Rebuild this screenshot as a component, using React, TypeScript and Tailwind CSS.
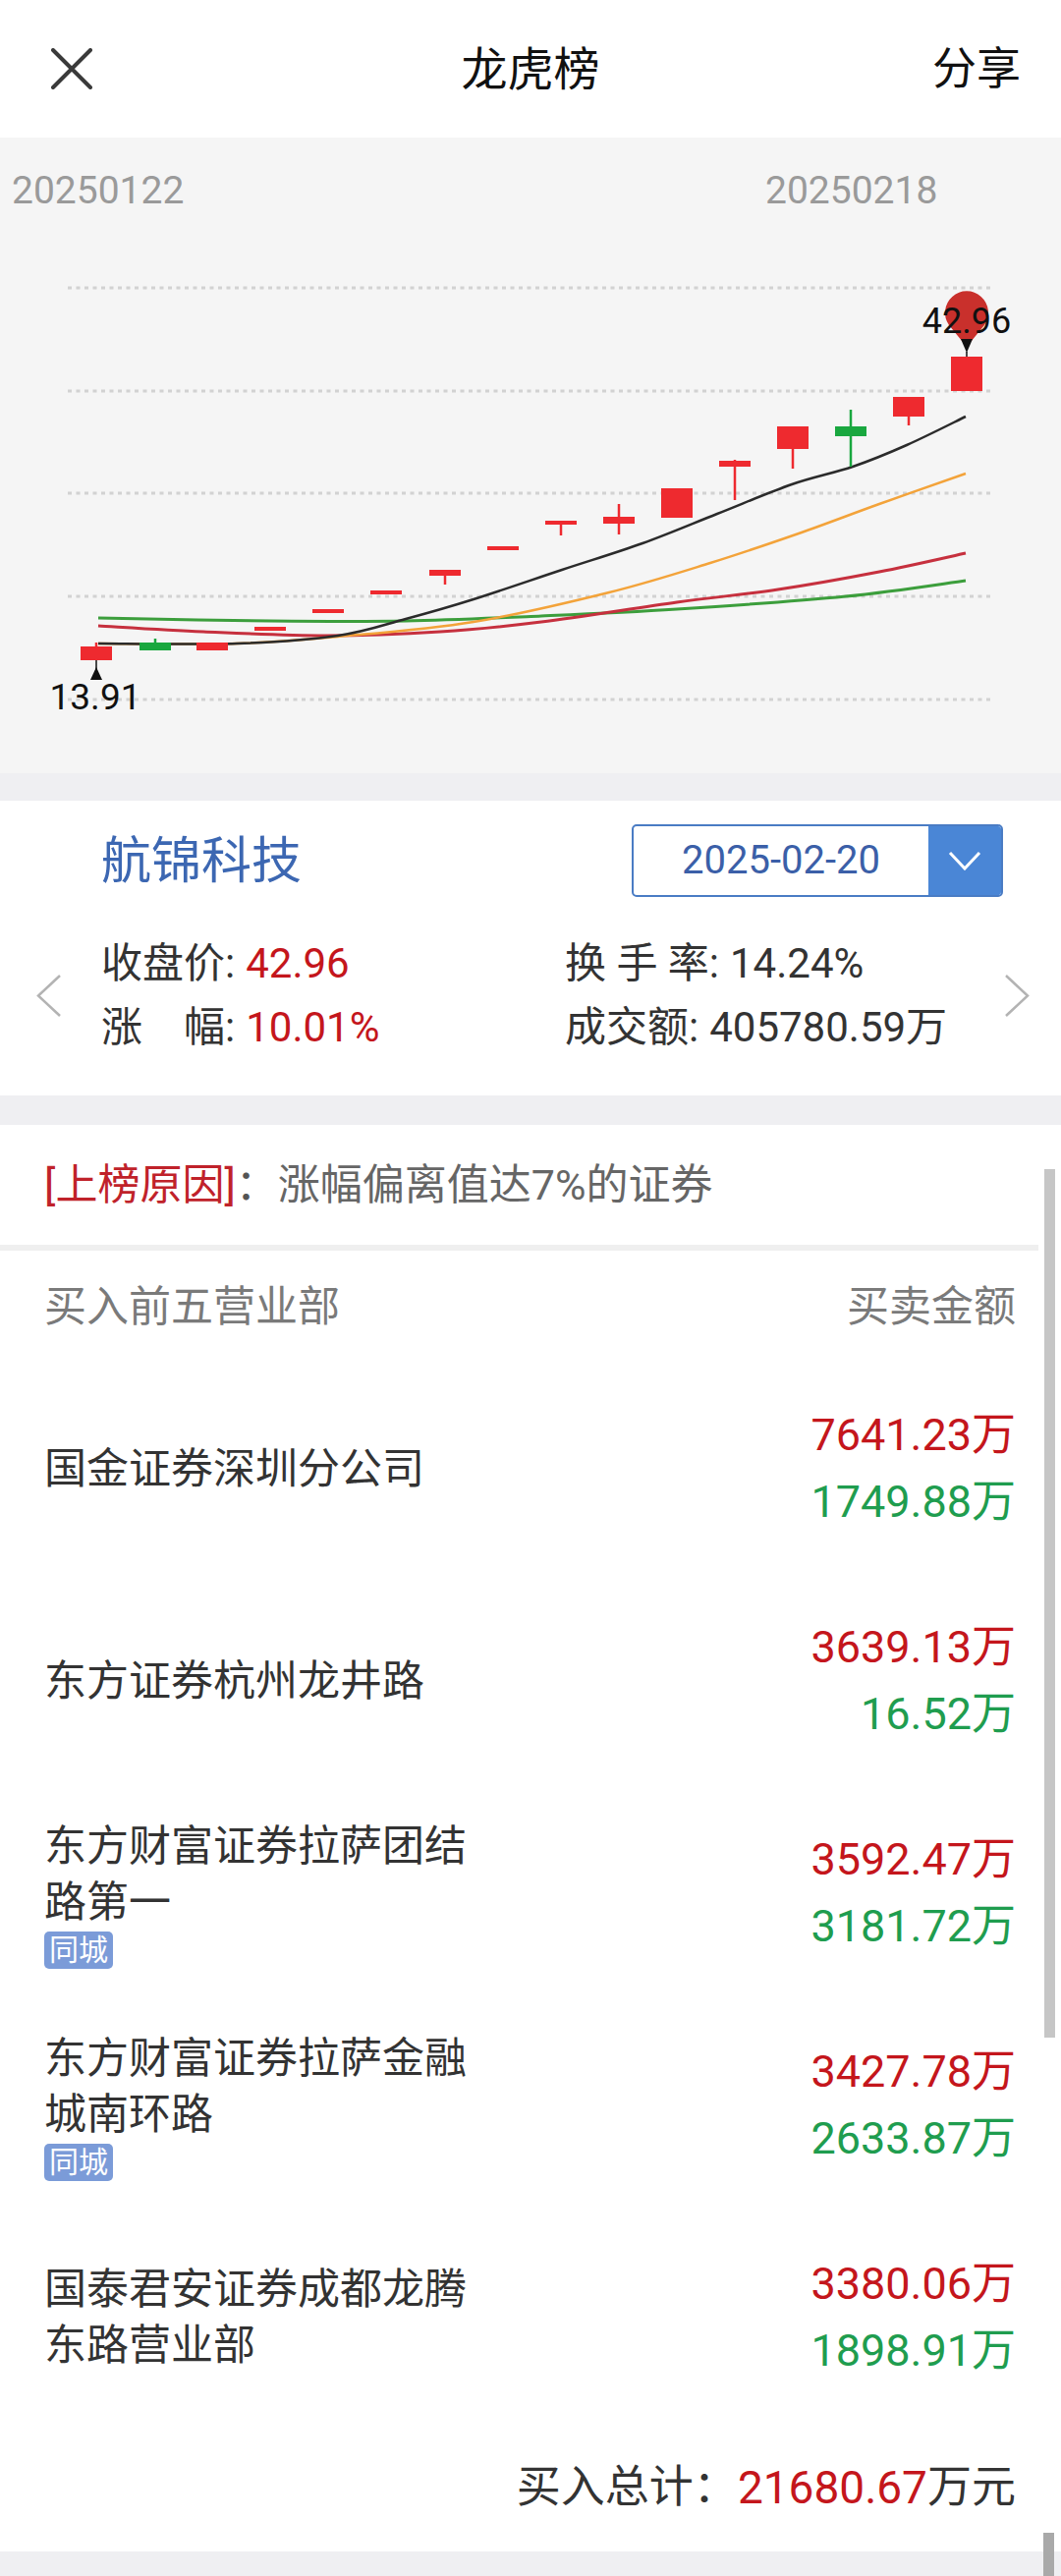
import React from "react";

const R = "#ee2a2f";
const G = "#19a73f";

type C = [number, number, number, number, number, string];
const candles: C[] = [
  [98, 518, 532, 514, 532, R],
  [158, 514, 522, 510, 522, G],
  [216, 514, 522, 514, 522, R],
  [275, 498, 502, 498, 502, R],
  [334, 480, 484, 480, 484, R],
  [393, 461, 465, 461, 465, R],
  [453, 440, 446, 440, 455, R],
  [512, 416, 420, 416, 420, R],
  [571, 390, 394, 390, 405, R],
  [630, 386, 393, 373, 404, R],
  [689, 357, 387, 357, 387, R],
  [748, 329, 335, 328, 369, R],
  [807, 294, 317, 294, 337, R],
  [866, 294, 304, 277, 335, G],
  [925, 264, 284, 264, 293, R],
  [984, 223, 258, 223, 258, R],
];

const maBlack: [number, number][] = [
  [100, 515], [241, 515], [344, 507], [413, 490], [482, 470], [572, 440], [654, 413], [730, 383], [806, 353], [868, 335], [923, 313], [983, 284],
];
const maOrange: [number, number][] = [
  [100, 515], [241, 515], [344, 508], [482, 493], [620, 463], [723, 433], [813, 403], [895, 373], [983, 342],
];
const maRed: [number, number][] = [
  [100, 497], [207, 503], [331, 507], [448, 503], [551, 493], [689, 473], [792, 460], [895, 442], [983, 423],
];
const maGreen: [number, number][] = [
  [100, 489], [275, 492], [413, 492], [551, 487], [689, 480], [861, 467], [983, 451],
];

function smooth(pts: [number, number][]) {
  let d = `M ${pts[0][0]} ${pts[0][1]}`;
  for (let i = 0; i < pts.length - 1; i++) {
    const p0 = pts[i - 1] || pts[i];
    const p1 = pts[i];
    const p2 = pts[i + 1];
    const p3 = pts[i + 2] || p2;
    const c1x = p1[0] + (p2[0] - p0[0]) / 6;
    const c1y = p1[1] + (p2[1] - p0[1]) / 6;
    const c2x = p2[0] - (p3[0] - p1[0]) / 6;
    const c2y = p2[1] - (p3[1] - p1[1]) / 6;
    d += ` C ${c1x} ${c1y} ${c2x} ${c2y} ${p2[0]} ${p2[1]}`;
  }
  return d;
}

function Chart() {
  const grid = [153, 258, 362, 467, 572];
  return (
    <div className="h-[647px] bg-[#f5f5f5]">
      <svg width="1080" height="647" viewBox="0 0 1080 647">
        <text x="12" y="67" fontSize="39" fill="#9a9a9a" fontFamily="Roboto, sans-serif">20250122</text>
        <text x="779" y="67" fontSize="39" fill="#9a9a9a" fontFamily="Roboto, sans-serif">20250218</text>
        {grid.map((y) => (
          <line key={y} x1="69" x2="1011" y1={y} y2={y} stroke="#d2d2d2" strokeWidth="3" strokeDasharray="4 4.5" />
        ))}
        <path d={smooth(maGreen)} fill="none" stroke="#3c9e3c" strokeWidth="3" />
        <path d={smooth(maRed)} fill="none" stroke="#c6303e" strokeWidth="3" />
        <path d={smooth(maOrange)} fill="none" stroke="#f3a33a" strokeWidth="2.5" />
        <path d={smooth(maBlack)} fill="none" stroke="#2b2b2b" strokeWidth="2.5" />
        {candles.map(([x, bt, bb, wt, wb, col], i) => (
          <g key={i}>
            <line x1={x} x2={x} y1={wt} y2={wb} stroke={col} strokeWidth="2.5" />
            <rect x={x - 16} y={bt} width="32" height={Math.max(bb - bt, 3)} fill={col} />
          </g>
        ))}
        {/* max marker */}
        <path d="M 984 213 L 966 191 A 22 22 0 1 1 1002 191 Z" fill="#c9302c" />
        <text x="984" y="199" fontSize="36" fill="#111" textAnchor="middle" fontFamily="Roboto, sans-serif">42.96</text>
        <path d="M 978 205 L 990 205 L 984 219 Z" fill="#111" />
        <line x1="984" x2="984" y1="218" y2="223" stroke="#111" strokeWidth="1.5" />
        {/* min marker */}
        <line x1="98" x2="98" y1="532" y2="541" stroke="#111" strokeWidth="1.5" />
        <path d="M 98 539 L 104 552 L 92 552 Z" fill="#111" />
        <text x="97" y="582" fontSize="37" fill="#111" textAnchor="middle" fontFamily="Roboto, sans-serif">13.91</text>
      </svg>
    </div>
  );
}

function InfoCard() {
  return (
    <div className="mt-[28px] h-[300px] bg-white pt-[24px]">
      <div className="flex items-center justify-between pl-[103px] pr-[59px]">
        <div className="text-[51px] leading-none text-[#3c67b2]">航锦科技</div>
        <div className="flex h-[74px] w-[378px] overflow-hidden rounded-[5px] border-2 border-[#4a7cc4]">
          <div className="flex flex-1 items-center justify-center text-[40px] text-[#3b5fa8]">2025-02-20</div>
          <div className="flex w-[74px] items-center justify-center bg-[#4a86d6]">
            <svg width="34" height="20" viewBox="0 0 34 20">
              <path d="M 2 2 L 17 18 L 32 2" fill="none" stroke="#fff" strokeWidth="3" />
            </svg>
          </div>
        </div>
      </div>
      <div className="relative mt-[35px] text-[42px] text-[#333]">
        <svg className="absolute left-[36px] top-[43px]" width="28" height="45" viewBox="0 0 28 45">
          <path d="M 25 2 L 3 22.5 L 25 43" fill="none" stroke="#b3b3b3" strokeWidth="2.5" />
        </svg>
        <svg className="absolute left-[1021px] top-[43px]" width="28" height="45" viewBox="0 0 28 45">
          <path d="M 3 2 L 25 22.5 L 3 43" fill="none" stroke="#b3b3b3" strokeWidth="2.5" />
        </svg>
        <div className="flex h-[65px] items-center">
          <div className="flex w-[575px] pl-[103px]">
            <span>收盘价:</span>
            <span className="ml-[11px] text-[#c4161c]">42.96</span>
          </div>
          <div className="flex">
            <span>换 手 率:</span>
            <span className="ml-[11px]">14.24%</span>
          </div>
        </div>
        <div className="flex h-[65px] items-center">
          <div className="flex w-[575px] pl-[103px]">
            <span className="flex w-[126px] justify-between">
              <span>涨</span>
              <span>幅</span>
            </span>
            <span>:</span>
            <span className="ml-[11px] text-[#c4161c]">10.01%</span>
          </div>
          <div className="flex">
            <span>成交额:</span>
            <span className="ml-[11px]">405780.59万</span>
          </div>
        </div>
      </div>
    </div>
  );
}

type Row = { name: string; buy: string; sell: string; badge?: boolean };
const rows: Row[] = [
  { name: "国金证券深圳分公司", buy: "7641.23万", sell: "1749.88万" },
  { name: "东方证券杭州龙井路", buy: "3639.13万", sell: "16.52万" },
  { name: "东方财富证券拉萨团结路第一", buy: "3592.47万", sell: "3181.72万", badge: true },
  { name: "东方财富证券拉萨金融城南环路", buy: "3427.78万", sell: "2633.87万", badge: true },
  { name: "国泰君安证券成都龙腾东路营业部", buy: "3380.06万", sell: "1898.91万" },
];

function ListCard() {
  return (
    <div className="relative mt-[30px] h-[1452px] bg-white">
      <div className="absolute right-[6px] top-[45px] h-[884px] w-[11px] bg-[#c6c6c6]" />
      <div className="flex h-[122px] items-center pl-[45px] text-[43px]">
        <span className="text-[#c0222a]">[上榜原因]</span>
        <span className="text-[#555]">：</span>
        <span className="text-[#666]">涨幅偏离值达7%的证券</span>
      </div>
      <div className="h-[6px] w-[1057px] bg-[#efefef]" />
      <div className="flex h-[114px] items-center justify-between pl-[45px] pr-[46px] text-[43px] text-[#7a7a7a]">
        <span>买入前五营业部</span>
        <span>买卖金额</span>
      </div>
      {rows.map((r) => (
        <div key={r.name} className="flex h-[216px] items-center justify-between pl-[45px] pr-[46px]">
          <div className="w-[440px]">
            <div className="text-[43px] leading-[57px] text-[#333]">{r.name}</div>
            {r.badge && (
              <div className="mt-[1px] inline-flex h-[38px] items-center rounded-[5px] bg-[#7b9bd8] px-[5px] text-[30px] leading-none text-white">
                同城
              </div>
            )}
          </div>
          <div className="text-right text-[45px] leading-[68px]">
            <div className="text-[#c4161c]">{r.buy}</div>
            <div className="text-[#1f9d4f]">{r.sell}</div>
          </div>
        </div>
      ))}
      <div className="flex h-[130px] items-center justify-end pr-[46px]">
        <span className="text-[45px] text-[#333]">买入总计：</span>
        <span className="text-[46px] text-[#c4161c]">21680.67</span>
        <span className="text-[45px] text-[#333]">万元</span>
      </div>
    </div>
  );
}

export default function App() {
  return (
    <div className="relative h-[2622px] w-[1080px] overflow-hidden bg-[#efeff2] font-[family-name:Roboto,'Noto_Sans_CJK_SC',sans-serif]">
      <div className="grid h-[140px] grid-cols-[1fr_auto_1fr] items-center bg-white">
        <div className="pl-[52px]">
          <svg width="42" height="42" viewBox="0 0 42 42">
            <path d="M 2 2 L 40 40 M 40 2 L 2 40" stroke="#3a3a3a" strokeWidth="4" strokeLinecap="round" />
          </svg>
        </div>
        <div className="text-[47px] leading-none text-[#111]">龙虎榜</div>
        <div className="pr-[41px] text-right text-[45px] leading-none text-[#111]">分享</div>
      </div>
      <Chart />
      <InfoCard />
      <ListCard />
      <div className="absolute left-[1062px] top-[2578px] h-[44px] w-[11px] bg-[#a9a9a9]" />
    </div>
  );
}
